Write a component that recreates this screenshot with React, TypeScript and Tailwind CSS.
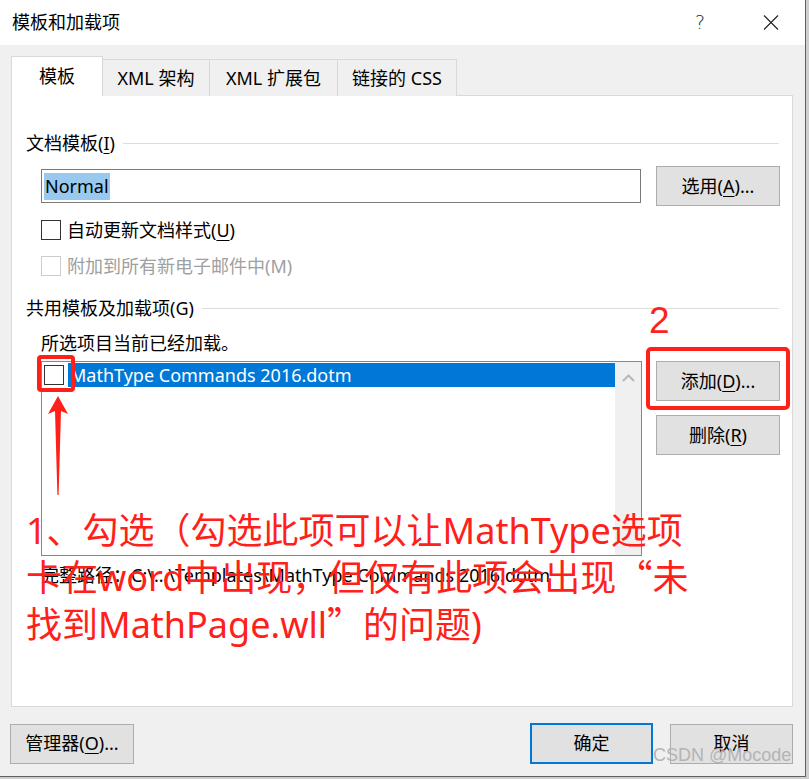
import React from "react";

const U = ({ c }: { c: string }) => <span className="underline underline-offset-[3px] decoration-1">{c}</span>;

function Btn({ children, className = "" }: { children: React.ReactNode; className?: string }) {
  return (
    <div className={"h-[40px] bg-[#e1e1e1] border border-[#adadad] flex items-center justify-center text-[18px] text-black " + className}>
      {children}
    </div>
  );
}

function Section({ label }: { label: React.ReactNode }) {
  return (
    <div className="flex items-center h-[24px] pl-[14px] pr-[13px]">
      <span className="text-[18px] leading-[24px] text-black whitespace-nowrap">{label}</span>
      <div className="flex-1 h-px bg-[#dcdcdc] ml-[8px]" />
    </div>
  );
}

const Q = ({ c }: { c: string }) => <span className="font-['Noto_Sans_CJK_SC',sans-serif]">{c}</span>;

export default function App() {
  return (
    <div className="relative w-[809px] h-[779px] bg-[#cfcfcf] overflow-hidden font-['Noto_Sans','Noto_Sans_CJK_SC',sans-serif]">
      <div className="w-[806px] h-[777px] bg-[#f0f0f0] border-r border-b border-[#5f5f5f] flex flex-col">
        {/* title bar */}
        <div className="h-[45px] bg-white flex items-center pl-[12px] shrink-0">
          <span className="text-[18px] text-black">模板和加载项</span>
          <div className="flex-1" />
          <span className="text-[19px] text-[#222] font-['DejaVu_Sans',sans-serif] font-light mr-[58px]">?</span>
          <svg width="16" height="15" viewBox="0 0 16 15" className="mr-[26px]">
            <path d="M1 0.5 L15 14.5 M15 0.5 L1 14.5" stroke="#222" strokeWidth="1.1" fill="none" />
          </svg>
        </div>
        {/* body */}
        <div className="px-[11px] pt-[12px] flex flex-col">
          {/* tabs */}
          <div className="flex items-end h-[39px] relative z-10 -mb-px">
            <div className="w-[92px] h-[40px] bg-white border border-b-0 border-[#d9d9d9] flex items-center justify-center text-[18px] text-black">模板</div>
            <div className="w-[107px] h-[37px] bg-[#f0f0f0] border border-l-0 border-b-0 border-[#d9d9d9] flex items-center justify-center text-[18px] text-black">XML 架构</div>
            <div className="w-[128px] h-[37px] bg-[#f0f0f0] border border-l-0 border-b-0 border-[#d9d9d9] flex items-center justify-center text-[18px] text-black">XML 扩展包</div>
            <div className="w-[119px] h-[37px] bg-[#f0f0f0] border border-l-0 border-b-0 border-[#d9d9d9] flex items-center justify-center text-[18px] text-black">链接的 CSS</div>
          </div>
          {/* panel */}
          <div className="w-[782px] h-[612px] bg-white border border-[#d9d9d9] flex flex-col pt-[35px]">
            <Section label={<>文档模板(<U c="I" />)</>} />
            <div className="flex items-center mt-[11px] pl-[29px] h-[40px]">
              <div className="w-[600px] h-[34px] border border-[#7a7a7a] flex items-center pl-[2px]">
                <span className="bg-[#99c9ef] text-[18px] leading-[27px] text-black px-[1px]">Normal</span>
              </div>
              <Btn className="w-[124px] ml-[15px]">选用(<U c="A" />)...</Btn>
            </div>
            <div className="flex items-center mt-[12px] pl-[29px] h-[24px]">
              <div className="w-[20px] h-[20px] border border-[#333] bg-white" />
              <span className="ml-[6px] text-[18px] text-black">自动更新文档样式(<U c="U" />)</span>
            </div>
            <div className="flex items-center mt-[12px] pl-[29px] h-[24px]">
              <div className="w-[20px] h-[20px] border border-[#cccccc] bg-white" />
              <span className="ml-[6px] text-[18px] text-[#a0a0a0]">附加到所有新电子邮件中(M)</span>
            </div>
            <div className="mt-[18px]">
              <Section label={<>共用模板及加载项(G)</>} />
            </div>
            <div className="mt-[11px] pl-[29px] h-[24px] flex items-center text-[18px] text-black">所选项目当前已经加载。</div>
            <div className="flex mt-[6px] pl-[29px]">
              <div className="w-[601px] h-[195px] border border-[#828790] flex">
                <div className="flex-1 pt-[1px]">
                  <div className="flex items-center h-[24px]">
                    <div className="w-[20px] h-[20px] border border-[#333] bg-white ml-[2px]" />
                    <div className="flex-1 h-[24px] bg-[#0078d7] ml-[4px] flex items-center pl-[2px] text-[18px] text-white">MathType Commands 2016.dotm</div>
                  </div>
                </div>
                <div className="w-[26px] bg-[#f0f0f0] flex justify-center pt-[12px]">
                  <svg width="13" height="8" viewBox="0 0 13 8">
                    <path d="M1 7 L6.5 1.5 L12 7" stroke="#b8b8b8" strokeWidth="2" fill="none" />
                  </svg>
                </div>
              </div>
              <div className="flex flex-col ml-[14px] gap-[14px]">
                <Btn className="w-[124px]">添加(<U c="D" />)...</Btn>
                <Btn className="w-[124px]">删除(<U c="R" />)</Btn>
              </div>
            </div>
            <div className="mt-[7px] pl-[29px] h-[24px] flex items-center text-[18px] text-black whitespace-nowrap">
              完整路径：C:\...\Templates\MathType Commands 2016.dotm
            </div>
          </div>
          {/* bottom buttons */}
          <div className="flex mt-[16px] items-center">
            <Btn className="w-[124px] -ml-px">管理器(<U c="O" />)...</Btn>
            <div className="flex-1" />
            <div className="w-[123px] h-[41px] bg-[#e1e1e1] border-2 border-[#0078d7] flex items-center justify-center text-[18px] text-black">确定</div>
            <Btn className="w-[123px] ml-[17px] mr-[1px]">取消</Btn>
          </div>
        </div>
      </div>

      {/* annotations */}
      <div className="absolute left-[37px] top-[355px] w-[38px] h-[37px] border-[4px] border-[#ff2119] rounded-[4px]" />
      <div className="absolute left-[646px] top-[347px] w-[144px] h-[63px] border-[4px] border-[#ff2119] rounded-[5px]" />
      <div className="absolute left-[649px] top-[298px] text-[37px] leading-[45px] text-[#ff2119] font-['Liberation_Sans',sans-serif]">2</div>
      <svg className="absolute left-0 top-0" width="809" height="779" viewBox="0 0 809 779">
        <polygon points="58,396 68,414 61,411 58.6,495 57.4,495 55,411 48,414" fill="#ff2119" />
      </svg>
      <div className="absolute left-[26px] top-[508px] text-[36px] leading-[45px] text-[#ff2119] whitespace-nowrap">
        <div>1、勾选（勾选此项可以让MathType选项</div>
        <div>卡在word中出现，但仅有此项会出现<Q c="“" />未</div>
        <div>找到MathPage.wll<Q c="”" />的问题)</div>
      </div>
      <div className="absolute left-[653px] top-[742px] text-[18px] leading-[26px] text-[#b4b4b4] font-['Liberation_Sans',sans-serif]">CSDN @Mocode</div>
    </div>
  );
}
